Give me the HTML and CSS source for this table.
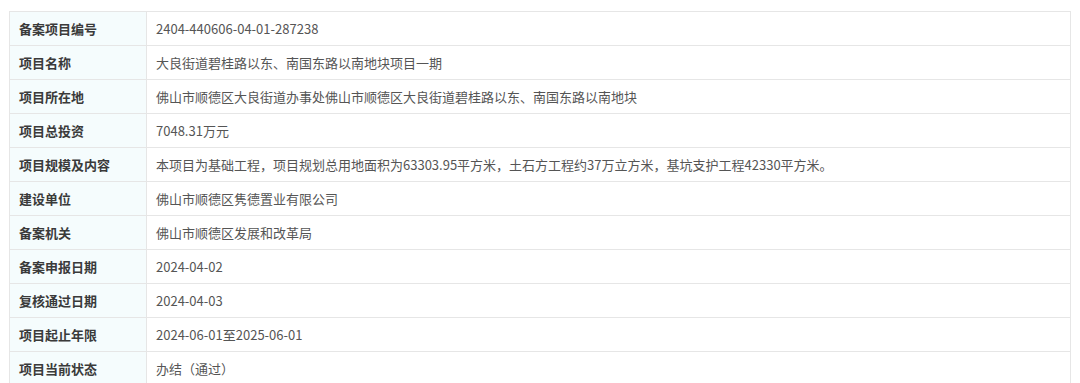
FILE: index.html
```html
<!DOCTYPE html>
<html lang="zh">
<head>
<meta charset="utf-8">
<link rel="stylesheet" href="styles.css">
</head>
<body>
<table class="info">
  <tr><th>备案项目编号</th><td>2404-440606-04-01-287238</td></tr>
  <tr><th>项目名称</th><td>大良街道碧桂路以东、南国东路以南地块项目一期</td></tr>
  <tr><th>项目所在地</th><td>佛山市顺德区大良街道办事处佛山市顺德区大良街道碧桂路以东、南国东路以南地块</td></tr>
  <tr><th>项目总投资</th><td>7048.31万元</td></tr>
  <tr><th>项目规模及内容</th><td>本项目为基础工程，项目规划总用地面积为63303.95平方米，土石方工程约37万立方米，基坑支护工程42330平方米。</td></tr>
  <tr><th>建设单位</th><td>佛山市顺德区隽德置业有限公司</td></tr>
  <tr><th>备案机关</th><td>佛山市顺德区发展和改革局</td></tr>
  <tr><th>备案申报日期</th><td>2024-04-02</td></tr>
  <tr><th>复核通过日期</th><td>2024-04-03</td></tr>
  <tr><th>项目起止年限</th><td>2024-06-01至2025-06-01</td></tr>
  <tr><th>项目当前状态</th><td>办结（通过）</td></tr>
</table>
</body>
</html>
```
FILE: styles.css
```css
html, body {
  margin: 0;
  padding: 0;
  background: #ffffff;
}
body {
  padding: 11px 9px 0 9px;
  font-family: "Microsoft YaHei", "Noto Sans CJK SC", "Noto Sans", sans-serif;
  font-size: 13px;
}
.info {
  width: 1062px;
  border-collapse: collapse;
  table-layout: fixed;
}
.info th,
.info td {
  height: 33px;
  border: 1px solid #e6e6e6;
  padding: 0 9px;
  text-align: left;
  vertical-align: middle;
  white-space: nowrap;
  line-height: 18px;
}
.info th {
  width: 118px;
  background: #f5fcfd;
  color: #3a3a3a;
  font-weight: bold;
}
.info td {
  color: #555555;
  font-weight: normal;
}
```
